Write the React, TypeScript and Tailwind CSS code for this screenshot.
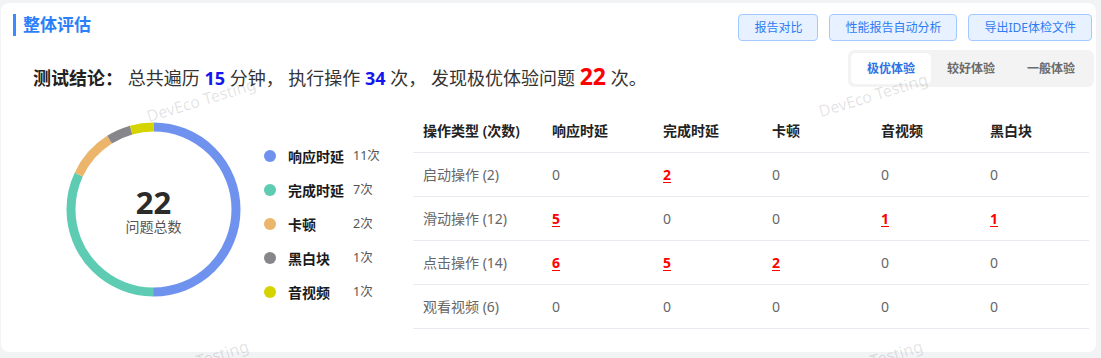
import React from 'react';

const font = "font-['Noto_Sans','Noto_Sans_CJK_SC',sans-serif]";

type Seg = { name: string; count: number; color: string };

const segs: Seg[] = [
  { name: '响应时延', count: 11, color: '#6f92ef' },
  { name: '完成时延', count: 7, color: '#5ecbb3' },
  { name: '卡顿', count: 2, color: '#ebb66c' },
  { name: '黑白块', count: 1, color: '#87878b' },
  { name: '音视频', count: 1, color: '#d6d400' },
];

type Cell = { v: number; hot?: boolean };

const rows: { name: string; cells: Cell[] }[] = [
  { name: '启动操作 (2)', cells: [{ v: 0 }, { v: 2, hot: true }, { v: 0 }, { v: 0 }, { v: 0 }] },
  { name: '滑动操作 (12)', cells: [{ v: 5, hot: true }, { v: 0 }, { v: 0 }, { v: 1, hot: true }, { v: 1, hot: true }] },
  { name: '点击操作 (14)', cells: [{ v: 6, hot: true }, { v: 5, hot: true }, { v: 2, hot: true }, { v: 0 }, { v: 0 }] },
  { name: '观看视频 (6)', cells: [{ v: 0 }, { v: 0 }, { v: 0 }, { v: 0 }, { v: 0 }] },
];

const headers = ['操作类型 (次数)', '响应时延', '完成时延', '卡顿', '音视频', '黑白块'];

const cols = 'grid grid-cols-[129px_111px_109px_109px_109px_1fr]';

function Donut() {
  const r = 82.5;
  const c = 2 * Math.PI * r;
  const total = segs.reduce((s, x) => s + x.count, 0);
  let offset = 0;
  return (
    <div className="relative w-[175px] h-[175px] shrink-0">
      <svg width="175" height="175" viewBox="0 0 175 175">
        <g transform="rotate(-90 87.5 87.5)">
          {segs.map((s) => {
            const len = (s.count / total) * c;
            const el = (
              <circle
                key={s.name}
                cx="87.5"
                cy="87.5"
                r={r}
                fill="none"
                stroke={s.color}
                strokeWidth="9"
                strokeDasharray={`${len} ${c - len}`}
                strokeDashoffset={-offset}
              />
            );
            offset += len;
            return el;
          })}
        </g>
      </svg>
      <div className="absolute inset-0 flex flex-col items-center justify-center pt-[3px]">
        <span className="text-[31px] leading-[30px] font-bold text-[#2b2b2b]">22</span>
        <span className="text-[14px] leading-[18px] text-[#555] mt-[1px]">问题总数</span>
      </div>
    </div>
  );
}

function Mark({ x, y }: { x: number; y: number }) {
  return (
    <span
      className="absolute -translate-x-1/2 -translate-y-1/2 -rotate-[17deg] whitespace-nowrap text-[16px] text-[#000]/[0.12] pointer-events-none"
      style={{ left: x, top: y }}
    >
      DevEco Testing
    </span>
  );
}

export default function App() {
  return (
    <div className={`relative w-[1101px] h-[358px] overflow-hidden bg-[#f2f3f5] ${font}`}>
      <div className="ml-[1px] mt-[3px] w-[1095px] h-[349px] rounded-[8px] bg-white">
        <div className="flex justify-between items-start pt-[11px] pl-[12px] pr-[4px]">
          <div className="flex items-center h-[22px]">
            <span className="w-[3px] h-[22px] bg-[#3a8bff]" />
            <span className="ml-[7px] text-[17px] font-bold text-[#2b7ff8] leading-[22px]">整体评估</span>
          </div>
          <div className="flex gap-[11px]">
            {['报告对比', '性能报告自动分析', '导出IDE体检文件'].map((b) => (
              <button
                key={b}
                className="h-[27px] px-[15px] rounded-[4px] border border-[#a3c9ff] bg-[#e7f1ff] text-[12px] text-[#2d7cf3]"
              >
                {b}
              </button>
            ))}
          </div>
        </div>

        <div className="flex justify-between h-[37px] mt-[9px] pl-[32px] pr-[2px]">
          <div className="pt-[14px] text-[18px] leading-[24px] text-[#333] whitespace-pre">
            <span className="font-bold text-[#222]">测试结论：</span>
            {' 总共遍历 '}
            <span className="font-bold text-[#1515ee]">15</span>
            {' 分钟， 执行操作 '}
            <span className="font-bold text-[#1515ee]">34</span>
            {' 次， 发现极优体验问题 '}
            <span className="text-[23px] leading-[24px] font-bold text-[#ff0000]">22</span>
            {' 次。'}
          </div>
          <div className="flex h-[37px] p-[3px] rounded-[6px] bg-[#f3f3f4]">
            {['极优体验', '较好体验', '一般体验'].map((t, i) => (
              <div
                key={t}
                className={
                  i === 0
                    ? 'w-[80px] flex items-center justify-center rounded-[5px] bg-white text-[12px] font-bold text-[#2a72e6]'
                    : 'w-[80px] flex items-center justify-center text-[12px] font-bold text-[#6b6b6b]'
                }
              >
                {t}
              </div>
            ))}
          </div>
        </div>

        <div className="flex mt-[22px]">
          <div className="w-[412px] flex">
            <div className="ml-[65px] mt-[13px]">
              <Donut />
            </div>
            <div className="ml-[23px] mt-[30px]">
              {segs.map((s) => (
                <div key={s.name} className="flex items-center h-[34px]">
                  <span className="w-[12px] h-[12px] rounded-full" style={{ background: s.color }} />
                  <span className="ml-[12px] w-[65px] text-[14px] font-bold text-[#1a1a1a]">{s.name}</span>
                  <span className="text-[12.5px] text-[#555]">{s.count}次</span>
                </div>
              ))}
            </div>
          </div>

          <div className="w-[676px] text-[14px]">
            <div className={`${cols} h-[44px] items-center border-b border-[#e8eaef] font-semibold text-[#222]`}>
              {headers.map((h) => (
                <div key={h} className="pl-[10px]">{h}</div>
              ))}
            </div>
            {rows.map((r) => (
              <div key={r.name} className={`${cols} h-[44px] items-center border-b border-[#e8eaef] text-[#666]`}>
                <div className="pl-[10px]">{r.name}</div>
                {r.cells.map((c, i) => (
                  <div key={i} className="pl-[10px]">
                    {c.hot ? (
                      <span className="font-bold text-[#ff0000] underline underline-offset-2">{c.v}</span>
                    ) : (
                      c.v
                    )}
                  </div>
                ))}
              </div>
            ))}
          </div>
        </div>
      </div>

      <Mark x={201} y={100} />
      <Mark x={873} y={95} />
      <Mark x={194} y={362} />
      <Mark x={868} y={362} />
    </div>
  );
}
